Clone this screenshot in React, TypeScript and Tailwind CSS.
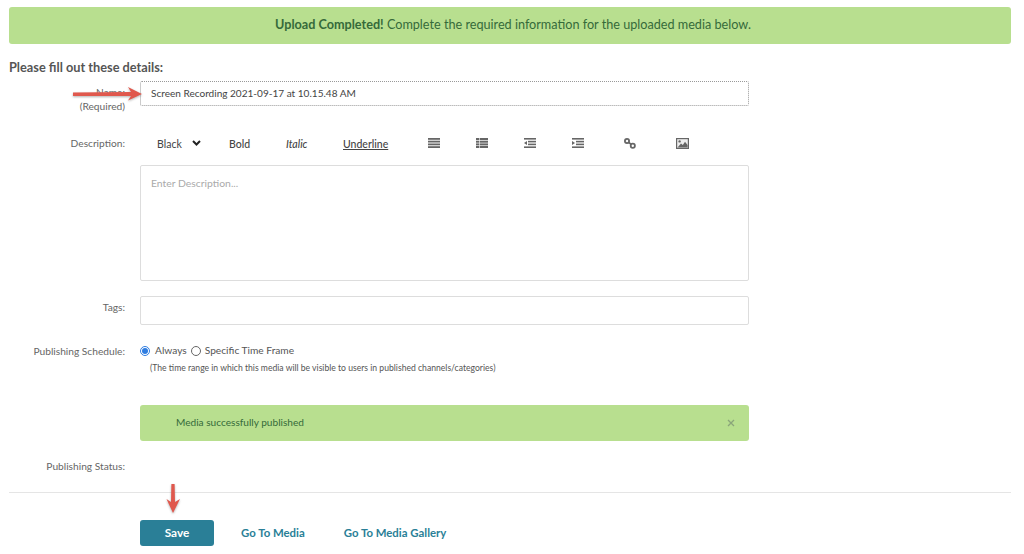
import React from "react";

const Lines = ({ kind }: { kind: number }) => (
  <svg width="12" height="10" viewBox="0 0 12 10" fill="#666">
    {kind === 0 && (<><rect x="0" y="0" width="12" height="1.8" /><rect x="0" y="2.7" width="12" height="1.8" /><rect x="0" y="5.5" width="12" height="1.8" /><rect x="0" y="8.2" width="12" height="1.8" /></>)}
    {kind === 1 && (<><rect x="0" y="0" width="3" height="2" /><rect x="3.6" y="0" width="8.4" height="2" /><rect x="0" y="2.7" width="3" height="2" /><rect x="3.6" y="2.7" width="8.4" height="2" /><rect x="0" y="5.4" width="3" height="2" /><rect x="3.6" y="5.4" width="8.4" height="2" /><rect x="0" y="8" width="3" height="2" /><rect x="3.6" y="8" width="8.4" height="2" /></>)}
    {kind === 2 && (<><rect x="0" y="0" width="12" height="1.6" /><rect x="4" y="2.8" width="8" height="1.6" /><rect x="4" y="5.6" width="8" height="1.6" /><rect x="0" y="8.4" width="12" height="1.6" /><path d="M3 3 L0 5 L3 7 Z" /></>)}
    {kind === 3 && (<><rect x="0" y="0" width="12" height="1.6" /><rect x="4" y="2.8" width="8" height="1.6" /><rect x="4" y="5.6" width="8" height="1.6" /><rect x="0" y="8.4" width="12" height="1.6" /><path d="M0 3 L3 5 L0 7 Z" /></>)}
  </svg>
);

const LinkIcon = () => (
  <svg width="12" height="11" viewBox="0 0 12 11" fill="none" stroke="#666" strokeWidth="1.8">
    <circle cx="3" cy="3" r="2.1" />
    <circle cx="8.8" cy="7.8" r="2.1" />
    <path d="M4.5 4.3 L7.2 6.4" />
  </svg>
);

const ImageIcon = () => (
  <svg width="13" height="11" viewBox="0 0 13 11">
    <rect x="0" y="0" width="13" height="11" fill="#666" />
    <rect x="1.2" y="1.2" width="10.6" height="8.6" fill="#eee" />
    <circle cx="3.6" cy="3.4" r="1.2" fill="#666" />
    <path d="M1.5 9.6 L5 5.6 L6.8 7 L9 3.8 L11.6 7 V9.6 Z" fill="#666" />
  </svg>
);

const Label = ({ children, className = "" }: { children: React.ReactNode; className?: string }) => (
  <div className={`w-[116px] shrink-0 text-right text-[10.2px] leading-[14px] text-[#666] ${className}`}>{children}</div>
);

export default function App() {
  return (
    <div className="relative h-[554px] w-[1024px] overflow-hidden bg-white pt-[7px] pr-[13px] pl-[9px] text-[#555]" style={{ fontFamily: "Lato, 'Open Sans', sans-serif" }}>
      <div className="flex h-[37px] items-center justify-center rounded-[3px] bg-[#b8df8f] pl-[6px] text-[12.65px] text-[#356a3a]">
        <span><b className="font-bold">Upload Completed!</b> Complete the required information for the uploaded media below.</span>
      </div>

      <h2 className="mt-[15px] text-[12.75px] leading-[16px] font-bold text-[#555]">Please fill out these details:</h2>

      <div className="mt-[6px] flex gap-[15px]">
        <Label className="pt-[4px]">
          <div>Name:</div>
          <div>(Required)</div>
        </Label>
        <div className="flex h-[25px] w-[609px] items-center rounded-[2px] border border-dotted border-[#999] px-[10px] text-[10.05px] text-[#444]">
          Screen Recording 2021-09-17 at 10.15.48 AM
        </div>
      </div>

      <div className="mt-[18px] flex h-[24px] items-center gap-[15px]">
        <Label>Description:</Label>
        <div className="flex items-center text-[10.5px] text-[#444]">
          <span className="mt-[3px] ml-[17px] w-[35px]">Black</span>
          <svg width="9" height="6" viewBox="0 0 9 6" fill="none" stroke="#222" strokeWidth="2"><path d="M1 1 L4.5 4.5 L8 1" /></svg>
          <span className="mt-[3px] ml-[28px] w-[57px] font-medium">Bold</span>
          <span className="mt-[3px] w-[57px] font-medium italic">Italic</span>
          <span className="mt-[3px] w-[85px] font-medium underline">Underline</span>
          <span className="flex w-[48px]"><Lines kind={0} /></span>
          <span className="flex w-[48px]"><Lines kind={1} /></span>
          <span className="flex w-[48px]"><Lines kind={2} /></span>
          <span className="flex w-[52px]"><Lines kind={3} /></span>
          <span className="flex w-[52px]"><LinkIcon /></span>
          <span className="flex"><ImageIcon /></span>
        </div>
      </div>

      <div className="mt-[10px] ml-[131px] h-[116px] w-[609px] rounded-[2px] border border-[#ddd] px-[10px] py-[10px] text-[10.4px] leading-[14px] text-[#aaa]">
        Enter Description...
      </div>

      <div className="mt-[15px] flex gap-[15px]">
        <Label className="pt-[4px]">Tags:</Label>
        <div className="h-[29px] w-[609px] rounded-[2px] border border-[#ddd]" />
      </div>

      <div className="mt-[19px] flex gap-[15px]">
        <Label>Publishing Schedule:</Label>
        <div>
          <div className="flex h-[14px] items-center text-[10.2px] text-[#555]">
            <span className="flex h-[10px] w-[10px] items-center justify-center rounded-full border border-[#2f7de1]">
              <span className="h-[6px] w-[6px] rounded-full bg-[#2f7de1]" />
            </span>
            <span className="ml-[5px]">Always</span>
            <span className="ml-[4px] h-[10px] w-[10px] rounded-full border border-[#666]" />
            <span className="ml-[4px]">Specific Time Frame</span>
          </div>
          <div className="mt-[4px] ml-[10px] text-[8.62px] leading-[12px] text-[#555]">
            (The time range in which this media will be visible to users in published channels/categories)
          </div>
        </div>
      </div>

      <div className="mt-[31px] ml-[131px] flex h-[36px] w-[609px] items-center justify-between rounded-[3px] bg-[#b8df8f] pr-[14px] pl-[36px] text-[10.1px] text-[#356a3a]">
        <span>Media successfully published</span>
        <svg width="8" height="8" viewBox="0 0 8 8" stroke="#8aa57a" strokeWidth="1.3"><path d="M1 1 L7 7 M7 1 L1 7" /></svg>
      </div>

      <div className="mt-[18px] flex gap-[15px]">
        <Label>Publishing Status:</Label>
      </div>

      <div className="mt-[19px] border-t border-[#e5e5e5]" />

      <div className="mt-[27px] ml-[131px] flex items-center">
        <button className="h-[26px] w-[74px] rounded-[3px] bg-[#2a7f97] text-[11.8px] font-bold text-white">Save</button>
        <a className="ml-[27px] text-[11.4px] font-bold text-[#2a7f97]">Go To Media</a>
        <a className="ml-[39px] text-[11.4px] font-bold text-[#2a7f97]">Go To Media Gallery</a>
      </div>

      <svg className="absolute top-[84px] left-[71px] drop-shadow-[0_1px_1px_rgba(0,0,0,0.3)]" width="72" height="20" viewBox="0 0 72 20" fill="#e0584d">
        <path d="M2 8.5 L60 8 L57 3 L71 10 L57 16.5 L60 12 L2 12 Z" />
      </svg>
      <svg className="absolute top-[483px] left-[165px] drop-shadow-[0_1px_1px_rgba(0,0,0,0.3)]" width="16" height="32" viewBox="0 0 16 32" fill="#e0584d">
        <path d="M6.4 1 L9.6 1 L10 19 L15 16 L8 30 L1.5 16 L6 19 Z" />
      </svg>
    </div>
  );
}
